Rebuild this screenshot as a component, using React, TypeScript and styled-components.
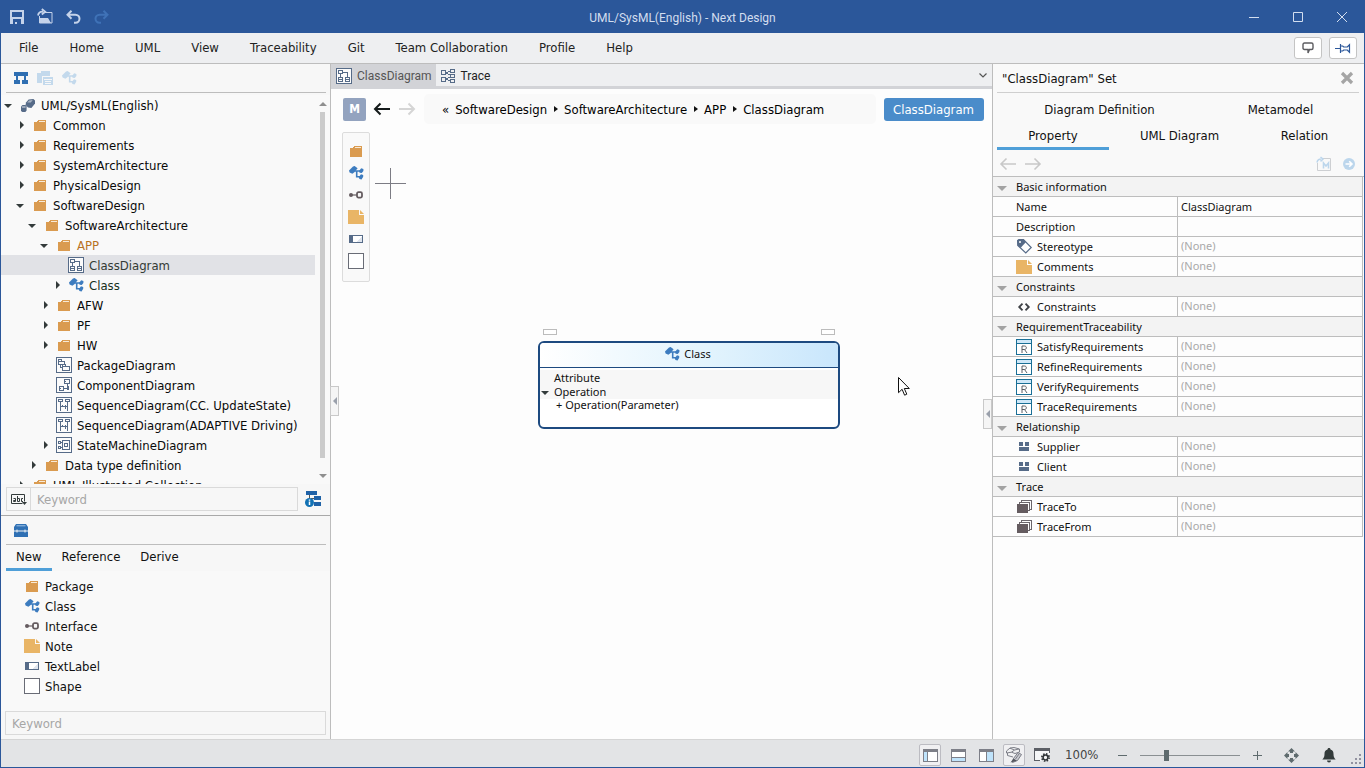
import React, { useState } from "react";
import styled, { createGlobalStyle, css } from "styled-components";

const ui = '"DejaVu Sans Condensed", "Noto Sans", sans-serif';
const small = '"Noto Sans", "Open Sans", sans-serif';
const caption = 'Roboto, "Open Sans", sans-serif';
const blue = "#2b579a";
const slate = "#566b88";
const line = "#bdbdbd";
const accent = "#4f9fd8";

const GlobalStyle = createGlobalStyle`
  *, *::before, *::after { box-sizing: border-box; }
  body { margin: 0; background: ${blue}; font-family: ${ui}; font-size: 13px; color: #111; }
  button, input { font: inherit; color: inherit; }
  button { padding: 0; border: 0; background: none; cursor: default; }
  ul, ol { margin: 0; padding: 0; list-style: none; }
  h1, h2 { margin: 0; font-size: inherit; font-weight: 400; }
  svg { display: block; flex: none; overflow: visible; }
`;

/* ---------- window ---------- */

const Window = styled.div`
  height: 100vh;
  display: flex;
  flex-direction: column;
  border: 1px solid ${blue};
  border-top: 0;
  background: #f8f8f8;
  overflow: hidden;
`;
const TitleBar = styled.header`
  flex: none;
  height: 33px;
  display: grid;
  grid-template-columns: 1fr auto 1fr;
  align-items: center;
  background: ${blue};
  color: #c9d6ea;
`;
const QuickBar = styled.div`
  display: flex;
  gap: 12px;
  padding-left: 8px;
`;
const IconButton = styled.button`
  width: 16px;
  height: 16px;
  display: flex;
  align-items: center;
  justify-content: center;
`;
const WindowTitle = styled.h1`
  font-family: ${caption};
  font-size: 12px;
  line-height: 16px;
  padding-top: 2px;
  color: #d3deef;
`;
const WindowButtons = styled.div`
  display: flex;
  justify-content: flex-end;
`;
const WindowButton = styled.button`
  width: 44px;
  height: 32px;
  display: flex;
  align-items: center;
  justify-content: center;
`;
const MenuBar = styled.nav`
  flex: none;
  height: 31px;
  display: flex;
  align-items: center;
  padding: 0 7px 0 0;
  background: #eeeff1;
  border-bottom: 1px solid ${line};
`;
const MenuList = styled.ul`
  flex: 1;
  display: flex;
  gap: 31px;
  padding: 0 0 2px 18px;
  color: #222;
`;
const MenuActions = styled.div`
  display: flex;
  gap: 7px;
`;
const MenuAction = styled.button`
  width: 28px;
  height: 22px;
  display: flex;
  align-items: center;
  justify-content: center;
  background: #fff;
  border: 1px solid #c4c4c4;
  border-radius: 3px;
`;
const Main = styled.main`
  flex: 1;
  min-height: 0;
  display: flex;
`;

/* ---------- left pane ---------- */

const SidePane = styled.aside`
  flex: none;
  width: 330px;
  display: flex;
  flex-direction: column;
  border-right: 1px solid ${line};
  background: #f7f7f7;
`;
const PaneTools = styled.div`
  flex: none;
  height: 29px;
  display: flex;
  align-items: center;
  gap: 8px;
  margin: 0 4px 0 5px;
  padding-left: 7px;
  border-bottom: 1px solid ${line};
`;
const TreeArea = styled.div`
  flex: 1;
  min-height: 0;
  display: flex;
  margin-top: 2px;
  overflow: hidden;
  background: #f9f9f9;
`;
const Tree = styled.ul`
  flex: 1;
  overflow: hidden;
`;
const TreeRow = styled.li<{ $level: number; $selected?: boolean; $tone?: string }>`
  height: 20px;
  display: flex;
  align-items: center;
  padding-left: ${(p) => 1 + p.$level * 12}px;
  line-height: 16px;
  white-space: nowrap;
  color: ${(p) => p.$tone || "#0a0a0a"};
  background: ${(p) => (p.$selected ? "#e1e2e6" : "transparent")};
`;
const TreeLabel = styled.span`
  padding-top: 2px;
`;
const Toggle = styled.button`
  width: 12px;
  height: 16px;
  margin-right: 6px;
  display: flex;
  align-items: center;
  justify-content: center;
`;
const IconSlot = styled.span`
  flex: none;
  width: 16px;
  height: 16px;
  margin-right: 5px;
  display: flex;
  align-items: center;
  justify-content: center;
`;
const ScrollBar = styled.div`
  flex: none;
  width: 5px;
  margin: 0 5px;
  padding: 7px 0 6px;
  display: flex;
  flex-direction: column;
  align-items: center;
  gap: 6px;
`;
const ScrollThumb = styled.div`
  flex: 1;
  width: 5px;
  margin-bottom: 10px;
  background: #cbcbcb;
`;
const FilterRow = styled.div`
  flex: none;
  display: flex;
  align-items: center;
  gap: 7px;
  padding: 3px 9px 4px 5px;
  border-bottom: 1px solid #a9a9a9;
`;
const FilterBox = styled.div`
  flex: 1;
  display: flex;
  height: 24px;
  border: 1px solid #dadada;
`;
const FilterMode = styled.button`
  width: 24px;
  padding-top: 1px;
  display: flex;
  align-items: center;
  justify-content: center;
  border-right: 1px solid #dadada;
`;
const fieldText = css`
  outline: 0;
  background: transparent;
  &::placeholder { color: #a6a6a6; opacity: 1; }
`;
const FilterInput = styled.input`
  ${fieldText}
  flex: 1;
  min-width: 0;
  border: 0;
  padding: 0 6px;
`;
const ToolTabs = styled.div`
  flex: none;
  display: flex;
  padding-left: 5px;
`;
const ToolTab = styled.button<{ $active?: boolean }>`
  height: 26px;
  padding: 0 10px;
  border-bottom: 3px solid ${(p) => (p.$active ? accent : "transparent")};
`;
const ToolList = styled.ul`
  padding: 5px 0 15px 23px;
  background: #f9f9f9;
`;
const ToolItem = styled.li`
  display: flex;
  align-items: center;
  height: 20px;
`;
const ToolFilter = styled.input`
  ${fieldText}
  height: 24px;
  margin: 0 4px 4px 4px;
  padding: 0 6px;
  border: 1px solid #dadada;
`;

/* ---------- editor ---------- */

const Editor = styled.section`
  flex: 1;
  min-width: 0;
  display: flex;
  flex-direction: column;
  position: relative;
  background: #fdfdfd;
`;
const DocTabs = styled.div`
  flex: none;
  height: 25px;
  display: flex;
  align-items: stretch;
  background: #eeeff1;
  border-bottom: 3px solid #d2d3d7;
`;
const DocTab = styled.button<{ $active?: boolean }>`
  display: flex;
  align-items: center;
  gap: 5px;
  padding: 2px 4px 0 5px;
  font-family: ${caption};
  font-size: 12px;
  color: ${(p) => (p.$active ? "#555" : "#222")};
  background: ${(p) => (p.$active ? "#d2d3d7" : "transparent")};
`;
const TabsMenu = styled.button`
  margin-left: auto;
  width: 18px;
  display: flex;
  align-items: center;
  justify-content: center;
`;
const EditorHead = styled.div`
  flex: none;
  display: flex;
  align-items: center;
  gap: 8px;
  padding: 5px 8px 0 12px;
`;
const ModeButton = styled.button`
  width: 23px;
  height: 23px;
  border-radius: 2px;
  background: #93a3bf;
  color: #fff;
  font-weight: 700;
  font-size: 12px;
`;
const NavArrow = styled.button`
  width: 16px;
  height: 16px;
  margin-right: 1px;
`;
const Crumbs = styled.ol`
  flex: 1;
  min-width: 0;
  height: 30px;
  display: flex;
  align-items: center;
  padding-left: 18px;
  border-radius: 5px;
  background: #f9f9f9;
  color: #000;
  white-space: nowrap;
`;
const Crumb = styled.li`
  display: flex;
  align-items: center;
  & + & { margin-left: 7px; }
  & + &::before {
    content: "";
    margin-right: 6px;
    border: solid transparent;
    border-width: 3px 0 3px 4px;
    border-left-color: #111;
  }
`;
const Quote = styled.span`
  margin-right: 6px;
`;
const KindButton = styled.button`
  height: 23px;
  padding: 0 10px 0 9px;
  border-radius: 3px;
  background: #4a8cca;
  color: #fff;
`;
const Canvas = styled.div`
  flex: 1;
  min-height: 0;
  position: relative;
  overflow: hidden;
`;
const Palette = styled.div`
  position: absolute;
  left: 11px;
  top: 8px;
  display: flex;
  flex-direction: column;
  padding: 7px 5px 9px;
  border: 1px solid #dcdcdc;
  border-radius: 2px;
  background: #f9f9f9;
`;
const PaletteButton = styled.button`
  width: 16px;
  height: 22px;
  display: flex;
  align-items: center;
  justify-content: center;
`;
const Placed = styled.div<{ $x: number; $y: number }>`
  position: absolute;
  left: ${(p) => p.$x}px;
  top: ${(p) => p.$y}px;
`;
const Port = styled.div`
  width: 14px;
  height: 6px;
  border: 1px solid #bcbcbc;
  background: #fff;
`;
const ClassNode = styled.div`
  width: 302px;
  height: 88px;
  border: 2px solid #1d4a80;
  border-radius: 6px;
  background: #fff;
  overflow: hidden;
  font-family: ${small};
  font-size: 11px;
  color: #111;
`;
const ClassHead = styled.div`
  height: 25px;
  display: flex;
  align-items: center;
  justify-content: center;
  gap: 4px;
  padding: 0 2px 3px 0;
  background: linear-gradient(90deg, #fff, #e3f4fd 55%, #c9e6fc);
  border-bottom: 1px solid #1d4a80;
`;
const Compartment = styled.div`
  margin-top: 2px;
  padding-top: 1px;
  background: #f7f7f7;
`;
const CompartmentRow = styled.div`
  height: 14px;
  line-height: 14px;
  display: flex;
  align-items: center;
`;
const CompartmentMark = styled.span`
  width: 14px;
  padding-left: 1px;
`;
const MemberRow = styled.div`
  padding-left: 16px;
  line-height: 12px;
`;
const Handle = styled.button<{ $side: "left" | "right" }>`
  position: absolute;
  ${(p) => (p.$side === "left" ? "left: -1px; top: 322px;" : "right: 0; top: 335px;")}
  width: 9px;
  height: 30px;
  display: flex;
  align-items: center;
  justify-content: center;
  background: #f5f5f5;
  border: 1px solid #c9c9c9;
`;

/* ---------- inspector ---------- */

const Inspector = styled.aside`
  flex: none;
  width: 372px;
  display: flex;
  flex-direction: column;
  border-left: 1px solid ${line};
  background: #fdfdfd;
`;
const InspectorTop = styled.div`
  padding: 0 5px 0 4px;
  background: #f9f9f9;
  border-bottom: 1px solid ${line};
`;
const InspectorTitle = styled.div`
  height: 29px;
  display: flex;
  align-items: center;
  justify-content: space-between;
  padding: 0 4px 0 5px;
  border-bottom: 1px solid #cfcfcf;
`;
const InspectorTabs = styled.div<{ $columns: string }>`
  display: grid;
  grid-template-columns: ${(p) => p.$columns};
`;
const InspectorTab = styled.button<{ $active?: boolean }>`
  height: 28px;
  padding-top: 2px;
  border-bottom: 3px solid ${(p) => (p.$active ? accent : "transparent")};
`;
const InspectorTabTop = styled.button`
  height: 29px;
  padding-top: 4px;
`;
const InspectorNav = styled.div`
  height: 26px;
  display: flex;
  align-items: center;
  gap: 9px;
  padding: 2px 2px 0 3px;
`;
const Spacer = styled.span`
  flex: 1;
`;
const PropTable = styled.table`
  width: 370px;
  border-collapse: separate;
  border-spacing: 0;
  table-layout: fixed;
  border-right: 1px solid ${line};
  font-family: ${small};
  font-size: 11px;
  color: #111;
  td, th {
    height: 20px;
    padding: 0;
    border-bottom: 1px solid ${line};
    font-weight: 400;
    text-align: left;
    line-height: 18px;
    overflow: hidden;
    white-space: nowrap;
  }
`;
const NameCol = styled.col`
  width: 184px;
`;
const GroupHead = styled.th`
  background: #f3f3f3;
`;
const GroupInner = styled.div`
  display: flex;
  align-items: center;
  gap: 9px;
  padding-left: 4px;
`;
const NameInner = styled.div`
  display: flex;
  align-items: center;
  height: 19px;
  padding-left: 23px;
`;
const ValueCell = styled.td<{ $empty?: boolean }>`
  && {
    padding-left: 3px;
    padding-bottom: ${(p) => (p.$empty ? 1 : 0)}px;
    border-left: 1px solid ${line};
  }
  color: ${(p) => (p.$empty ? "#a9a9a9" : "#111")};
`;

/* ---------- status bar ---------- */

const StatusBar = styled.footer`
  flex: none;
  height: 28px;
  display: flex;
  align-items: center;
  justify-content: flex-end;
  padding: 3px 2px 0 0;
  background: #e3e4e6;
  border-top: 1px solid #d5d5d5;
`;
const StatusButtons = styled.div`
  display: flex;
  gap: 6px;
`;
const StatusButton = styled.button<{ $pressed?: boolean }>`
  width: 22px;
  height: 22px;
  display: flex;
  align-items: center;
  justify-content: center;
  border: 1px solid ${(p) => (p.$pressed ? "#bcbcc2" : "transparent")};
  border-radius: 2px;
  background: ${(p) => (p.$pressed ? "#f0f0f2" : "transparent")};
`;
const ZoomText = styled.output`
  width: 48px;
  padding: 0 0 2px 12px;
  margin-right: 17px;
  color: #444;
`;
const Slider = styled.input`
  appearance: none;
  width: 100px;
  height: 12px;
  margin: 0 13px;
  background: linear-gradient(#8a8f92, #8a8f92) center / 100% 1px no-repeat;
  &::-webkit-slider-thumb {
    appearance: none;
    width: 5px;
    height: 11px;
    background: #5f6b6e;
  }
`;
const StatusEnd = styled.div`
  display: flex;
  align-items: center;
  gap: 22px;
  margin-left: 21px;
`;
const Grip = styled.span`
  align-self: flex-end;
  margin-left: 14px;
`;

/* ---------- icons ---------- */

const FolderIcon = () => (
  <svg width="12" height="11" viewBox="0 0 12 11" shapeRendering="crispEdges">
    <path d="M0 2h3l1-2h8v11H0z" fill="#da9b50" />
    <path d="M4 2h7V1H5z" fill="#f8ead6" />
  </svg>
);
const ClassIcon = ({ color = "#3d7cbf" }: { color?: string }) => (
  <svg width="15" height="14" viewBox="0 0 15 14">
    <path d="M0 4.6 4 .4 5.600 0l3 2.200L5.400 6.200l-2 1.600L.6 6.600z" fill={color} />
    <path d="M5.500 5h6M7.700 5v5.800H11" fill="none" stroke={color} strokeWidth="1.600" />
    <path d="m12.200 2.200 2.200.8v2L12.800 7l-2.200-.2-.6-1.900zM12 8.200l2.200.8v1.800L12.600 13.400l-2.200-.4-.6-1.900z" fill={color} />
  </svg>
);
const InterfaceIcon = () => (
  <svg width="14" height="8" viewBox="0 0 14 8">
    <circle cx="2" cy="4" r="2" fill="#655c60" />
    <path d="M3 4h5" stroke="#655c60" strokeWidth="1.2" />
    <rect x="8" y="1.2" width="5" height="5.4" rx="1.5" fill="none" stroke="#655c60" strokeWidth="1.8" />
  </svg>
);
const NoteIcon = () => (
  <svg width="16" height="14" viewBox="0 0 16 14">
    <path d="M0 0h11v5h5v9H0z" fill="#e9b566" />
    <path d="M12 0v4h4z" fill="#e9b566" />
  </svg>
);
const TextLabelIcon = () => (
  <svg width="14" height="8" viewBox="0 0 14 8" shapeRendering="crispEdges">
    <path d="M0 0h14v8H0z" fill={slate} />
    <path d="M4 1h9v6H4z" fill="#fff" />
    <path d="M13 2v5H7z" fill="#dfe5ee" />
  </svg>
);
const ShapeIcon = () => (
  <svg width="16" height="16" viewBox="0 0 16 16">
    <rect x=".5" y=".5" width="15" height="15" fill="#fff" stroke="#696c76" />
  </svg>
);
const DiagramFrame = ({ d }: { d: string }) => (
  <svg width="16" height="16" viewBox="0 0 16 16" fill="none" stroke={slate} shapeRendering="crispEdges">
    <rect x=".5" y=".5" width="15" height="15" fill="#fbfbfb" />
    <path d={d} />
  </svg>
);
const ClassDiagramIcon = () => (
  <DiagramFrame d="M2.5 2.5h4v3h-4zM2.5 9.5h4v4h-4zM9.5 9.5h4v4h-4zM4.5 5.5v4M6.5 4.5h5v5M2.5 11.5h4M9.5 11.5h4" />
);
const PackageDiagramIcon = () => (
  <DiagramFrame d="M2.5 2.5h3v2h-3zM2.5 4.5h6v3h-6zM6.5 7.5h3v2h-3zM6.5 9.5h7v4h-7zM4.5 7.5v3h2" />
);
const ComponentDiagramIcon = () => (
  <DiagramFrame d="M8.5 2.5h5v4h-5zM7.5 4.5h2M3.5 9.5h4v4h-4zM2.5 11.5h2M7.5 11.5h4v-5M10.5 9.5h2v3h-2" />
);
const SequenceDiagramIcon = () => (
  <DiagramFrame d="M2.5 2.5h4v2h-4zM9.5 2.5h4v2h-4zM4.5 4.5v9M11.5 4.5v9M4.5 9.5h7M9.5 7.5v4M6.5 7.5v1" />
);
const StateDiagramIcon = () => (
  <DiagramFrame d="M2.5 4.5h2v2h-2zM6.5 3.5h7v9h-7zM8.5 6.5h3v3h-3zM2.5 9.5h2v2h-2zM4.5 5.5h2M4.5 10.5h2" />
);
const ProjectIcon = () => (
  <svg width="14" height="13" viewBox="0 0 14 13">
    <path d="M5 3.4 7.6.6 12.4 0 14 1.4v3L10.4 9 7 8.4 4.6 6z" fill={slate} />
    <path d="m6.2 3.6 2-2.2 3.6-.3-2 2.4z" fill="#a9b4c4" />
    <path d="M0 7.4 1.5 6h3L5.6 7v4.5L4.4 13h-3L0 12z" fill={slate} />
    <path d="M1 8h3.6" stroke="#dfe4ea" />
  </svg>
);
const TracePageIcon = () => (
  <svg width="15" height="14" viewBox="0 0 15 14" fill="none" stroke={slate} shapeRendering="crispEdges">
    <path d="M.5 1.5h4v4h-4zM.5 8.5h4v4h-4zM9.5.5h4v3h-4zM9.5 5.5h4v3h-4zM9.5 10.5h4v3h-4zM4.5 3.5l5-1M4.5 3.5l5 3M4.5 10.5l5-3M4.5 10.5l5 1" />
  </svg>
);
const Caret = ({ open, color = "#333b3b" }: { open?: boolean; color?: string }) => (
  <svg width="8" height="8" viewBox="0 0 8 8">
    <path d={open ? "M0 3h8L4 7z" : "M4 0v8l4-4z"} fill={color} />
  </svg>
);
const GroupCaret = () => (
  <svg width="10" height="8" viewBox="0 0 10 8"><path d="M0 3h10L5 8z" fill="#a2a2a2" /></svg>
);
const ArrowIcon = ({ right, color, width = 1.6 }: { right?: boolean; color: string; width?: number }) => (
  <svg width="16" height="16" viewBox="0 0 16 16" fill="none" stroke={color} strokeWidth={width}>
    <path d={right ? "M0 8h15M9.5 2.5 15 8l-5.5 5.5" : "M16 8H1M6.5 2.5 1 8l5.5 5.5"} />
  </svg>
);
const ReqIcon = () => (
  <svg width="16" height="16" viewBox="0 0 16 16" shapeRendering="crispEdges">
    <rect x=".5" y=".5" width="15" height="15" fill="#fff" stroke="#1a6f96" />
    <path d="M1 1h14v3H1z" fill="#cfe9fa" />
    <path d="M1 4.5h14" stroke="#1a6f96" />
    <path d="M6 14V7h2.5c2.500 0 2.500 3.500 0 3.500H6M8.500 10.500 11 14" fill="none" stroke="#5a5f66" shapeRendering="auto" />
  </svg>
);
const TagIcon = () => (
  <svg width="15" height="15" viewBox="0 0 15 15">
    <path d="M.6 1.600 2 .6h4.500L14.200 8.500 8.800 14 .8 6.400z" fill="#fff" stroke={slate} strokeWidth="1.200" />
    <path d="M.5 1.500 1.500.5h5L9 3 3.500 9 .5 6.200z" fill={slate} />
    <circle cx="3" cy="3" r="1" fill="#fff" />
  </svg>
);
const CodeIcon = () => (
  <svg width="12" height="8" viewBox="0 0 12 8" fill="none" stroke="#3f4246" strokeWidth="1.800">
    <path d="M4.500.6 1.200 4l3.300 3.400M7.500.6 10.800 4 7.500 7.400" />
  </svg>
);
const RelationIcon = () => (
  <svg width="10" height="9" viewBox="0 0 10 9" fill={slate} shapeRendering="crispEdges">
    <path d="M0 0h4v4H0zM6 0h4v4H6zM0 5h10v4H0z" />
  </svg>
);
const StackIcon = () => (
  <svg width="15" height="13" viewBox="0 0 15 13" shapeRendering="crispEdges">
    <path d="M4.500 2V.5h10v9H13M2.500 4V2.500h10v8H11" fill="none" stroke="#6b666b" />
    <path d="M0 4h11v9H0z" fill="#655c60" />
  </svg>
);
const LayoutIcon = ({ area }: { area: string }) => (
  <svg width="15" height="13" viewBox="0 0 15 13" shapeRendering="crispEdges">
    <rect x=".5" y=".5" width="14" height="12" fill="#fff" stroke="#7d7f88" />
    <path d={area} fill="#bfe3fb" stroke="#7d7f88" strokeWidth="1" />
    <path d="M0 0h15v3H0z" fill="#7d7f88" />
  </svg>
);

/* ---------- data ---------- */

const folder = <FolderIcon />;
const known = "#16301c";

type Node = { level: number; label: string; icon: React.ReactNode; open?: boolean; leaf?: boolean; tone?: string };

const nodes: Node[] = [
  { level: 0, label: "UML/SysML(English)", icon: <ProjectIcon />, open: true },
  { level: 1, label: "Common", icon: folder },
  { level: 1, label: "Requirements", icon: folder },
  { level: 1, label: "SystemArchitecture", icon: folder },
  { level: 1, label: "PhysicalDesign", icon: folder },
  { level: 1, label: "SoftwareDesign", icon: folder, open: true },
  { level: 2, label: "SoftwareArchitecture", icon: folder, open: true },
  { level: 3, label: "APP", icon: folder, open: true, tone: "#b8721f" },
  { level: 4, label: "ClassDiagram", icon: <ClassDiagramIcon />, leaf: true, tone: "#333b35" },
  { level: 4, label: "Class", icon: <ClassIcon />, tone: known },
  { level: 3, label: "AFW", icon: folder },
  { level: 3, label: "PF", icon: folder },
  { level: 3, label: "HW", icon: folder },
  { level: 3, label: "PackageDiagram", icon: <PackageDiagramIcon />, leaf: true },
  { level: 3, label: "ComponentDiagram", icon: <ComponentDiagramIcon />, leaf: true },
  { level: 3, label: "SequenceDiagram(CC. UpdateState)", icon: <SequenceDiagramIcon />, leaf: true },
  { level: 3, label: "SequenceDiagram(ADAPTIVE Driving)", icon: <SequenceDiagramIcon />, leaf: true },
  { level: 3, label: "StateMachineDiagram", icon: <StateDiagramIcon /> },
  { level: 2, label: "Data type definition", icon: folder },
  { level: 1, label: "UML Illustrated Collection", icon: folder },
];

const tools = [
  { label: "Package", icon: <FolderIcon /> },
  { label: "Class", icon: <ClassIcon /> },
  { label: "Interface", icon: <InterfaceIcon /> },
  { label: "Note", icon: <NoteIcon /> },
  { label: "TextLabel", icon: <TextLabelIcon /> },
  { label: "Shape", icon: <ShapeIcon /> },
];

type Prop = { name: string; icon?: React.ReactNode; value?: string };
const none = "(None)";
const groups: { title: string; rows: Prop[] }[] = [
  {
    title: "Basic information",
    rows: [
      { name: "Name", value: "ClassDiagram" },
      { name: "Description", value: "" },
      { name: "Stereotype", icon: <TagIcon />, value: none },
      { name: "Comments", icon: <NoteIcon />, value: none },
    ],
  },
  { title: "Constraints", rows: [{ name: "Constraints", icon: <CodeIcon />, value: none }] },
  {
    title: "RequirementTraceability",
    rows: ["SatisfyRequirements", "RefineRequirements", "VerifyRequirements", "TraceRequirements"].map((name) => ({
      name,
      icon: <ReqIcon />,
      value: none,
    })),
  },
  {
    title: "Relationship",
    rows: ["Supplier", "Client"].map((name) => ({ name, icon: <RelationIcon />, value: none })),
  },
  { title: "Trace", rows: ["TraceTo", "TraceFrom"].map((name) => ({ name, icon: <StackIcon />, value: none })) },
];

const menus = ["File", "Home", "UML", "View", "Traceability", "Git", "Team Collaboration", "Profile", "Help"];
const crumbs = ["SoftwareDesign", "SoftwareArchitecture", "APP", "ClassDiagram"];

/* ---------- sections ---------- */

const Title = () => (
  <TitleBar>
    <QuickBar>
      <IconButton aria-label="Save">
        <svg width="14" height="14" viewBox="0 0 14 14" shapeRendering="crispEdges">
          <path fillRule="evenodd" d="M0 0h14v14H0zM2 2v5h10V2zM3 9v5h2v-2h2v2h4V9z" fill="#c5d3ea" />
        </svg>
      </IconButton>
      <IconButton aria-label="Open">
        <svg width="15" height="15" viewBox="0 0 15 15" fill="none" stroke="#c5d3ea">
          <path d="M6.500 3.500h7.500v10.500H1.500v-7" />
          <path d="M1 9h9l3 5H1z" fill="#c5d3ea" stroke="none" />
          <path d="M0 6.500c.5-3 2-4 5-3.800M3.800 0l3.400 2.700-3.400 2.800" strokeWidth="1.800" />
        </svg>
      </IconButton>
      <IconButton aria-label="Undo">
        <svg width="15" height="14" viewBox="0 0 15 14" fill="none" stroke="#c5d3ea" strokeWidth="2">
          <path d="M5.500.8 1.500 4.800l4 4M1.500 4.800h7.800c5.600 0 5.600 8 0 8H8" />
        </svg>
      </IconButton>
      <IconButton aria-label="Redo">
        <svg width="15" height="14" viewBox="0 0 15 14" fill="none" stroke="#3f72b7" strokeWidth="2">
          <path d="m9.500.8 4 4-4 4M13.500 4.800H5.700c-5.600 0-5.600 8 0 8H7" />
        </svg>
      </IconButton>
    </QuickBar>
    <WindowTitle>UML/SysML(English) - Next Design</WindowTitle>
    <WindowButtons>
      <WindowButton aria-label="Minimize">
        <svg width="10" height="10" viewBox="0 0 10 10" stroke="#d3deef"><path d="M0 5.500h10" /></svg>
      </WindowButton>
      <WindowButton aria-label="Maximize">
        <svg width="10" height="10" viewBox="0 0 10 10" fill="none" stroke="#d3deef"><path d="M.5.5h9v9h-9z" /></svg>
      </WindowButton>
      <WindowButton aria-label="Close">
        <svg width="10" height="10" viewBox="0 0 10 10" stroke="#d3deef"><path d="m0 0 10 10M10 0 0 10" /></svg>
      </WindowButton>
    </WindowButtons>
  </TitleBar>
);

const Menu = () => (
  <MenuBar>
    <MenuList>
      {menus.map((m) => (
        <li key={m}>
          <button>{m}</button>
        </li>
      ))}
    </MenuList>
    <MenuActions>
      <MenuAction aria-label="Feedback">
        <svg width="12" height="12" viewBox="0 0 12 12" fill="none" stroke="#5c5c60" strokeWidth="1.400">
          <path d="M2.500 1h7Q11 1 11 2.500v3.500Q11 7.500 9.500 7.500H7.500L6 11V7.500H2.500Q1 7.500 1 6V2.500Q1 1 2.500 1z" />
        </svg>
      </MenuAction>
      <MenuAction aria-label="Pin ribbon">
        <svg width="16" height="9" viewBox="0 0 16 9" fill="none" stroke={blue} strokeWidth="1.200">
          <path d="M0 4.500h5M5.500 0v9M5.500 2h2.200l1 1h3.600L14.500.8v7.400L12.300 6H8.700l-1 1H5.500" />
        </svg>
      </MenuAction>
    </MenuActions>
  </MenuBar>
);

const LeftPane = () => {
  const [selected, setSelected] = useState(8);
  return (
    <SidePane>
      <PaneTools>
        <IconButton aria-label="Model tree">
          <svg width="14" height="12" viewBox="0 0 14 12" fill="#2f6fb2" shapeRendering="crispEdges">
            <path d="M0 0h14v4H0zM2 4h2v4H2zM10 4h2v4h-2zM0 8h6v4H0zM8 8h6v4H8z" />
          </svg>
        </IconButton>
        <IconButton aria-label="Documents">
          <svg width="16" height="14" viewBox="0 0 16 14" fill="#c3d9ec" shapeRendering="crispEdges">
            <path d="M0 2h4V0h9v5H5v7H0z" />
            <path fillRule="evenodd" d="M6 6h10v8H6zM7 8v1h8V8zM8 10v1h6v-1zM8 12v1h6v-1z" />
          </svg>
        </IconButton>
        <IconButton aria-label="Classes">
          <ClassIcon color="#c3d9ec" />
        </IconButton>
      </PaneTools>
      <TreeArea>
        <Tree role="tree">
          {nodes.map((n, i) => (
            <TreeRow
              key={i}
              role="treeitem"
              aria-selected={i === selected}
              $level={n.level}
              $selected={i === selected}
              $tone={n.tone}
              onClick={() => setSelected(i)}
            >
              <Toggle aria-label={n.label}>{!n.leaf && <Caret open={n.open} />}</Toggle>
              <IconSlot>{n.icon}</IconSlot>
              <TreeLabel>{n.label}</TreeLabel>
            </TreeRow>
          ))}
        </Tree>
        <ScrollBar>
          <svg width="8" height="4" viewBox="0 0 8 4"><path d="M0 4h8L4 0z" fill="#8f8f8f" /></svg>
          <ScrollThumb />
          <svg width="8" height="4" viewBox="0 0 8 4"><path d="M0 0h8L4 4z" fill="#8f8f8f" /></svg>
        </ScrollBar>
      </TreeArea>
      <FilterRow>
        <FilterBox>
          <FilterMode aria-label="Match mode">
            <svg width="16" height="12" viewBox="0 0 16 12">
              <path d="M.5.5h13v7M.5.5v9h11" fill="none" stroke="#333b3b" />
              <path d="M2.500 4.500h2v3h-2v-1h2M6.500 2v5.500h2v-3h-2M12 4.500h-1.500v3H12" fill="none" stroke="#333b3b" />
              <path d="M11 8h5l-2.500 3z" fill="#333b3b" />
            </svg>
          </FilterMode>
          <FilterInput aria-label="Filter model tree" placeholder="Keyword" />
        </FilterBox>
        <IconButton aria-label="Tree information">
          <svg width="16" height="16" viewBox="0 0 16 16">
            <path d="M1 0h11v4H1zM9 5h7v4H9zM9 11h7v4H9z" fill="#1f62a7" />
            <path d="M4.500 4v3M6 7.500h3" stroke="#555" />
            <circle cx="4.500" cy="11.500" r="4.500" fill="#1272b4" />
            <path d="M4.500 8.500v1.300M4.500 10.500V14" stroke="#fff" strokeWidth="1.500" />
          </svg>
        </IconButton>
      </FilterRow>
      <PaneTools>
        <IconButton aria-label="Toolbox">
          <svg width="14" height="13" viewBox="0 0 14 13" fill="#2f70b4">
            <path d="M2 0h10l2 3v3.500h-2.500V5.500h-1v1h-7v-1h-1v1H0V3zM0 7.500h2.500v1h1v-1h7v1h1v-1H14V13H0z" />
            <path d="M2.500 1.800h9" stroke="#9fc2e4" />
          </svg>
        </IconButton>
      </PaneTools>
      <ToolTabs role="tablist">
        <ToolTab role="tab" $active>New</ToolTab>
        <ToolTab role="tab">Reference</ToolTab>
        <ToolTab role="tab">Derive</ToolTab>
      </ToolTabs>
      <ToolList>
        {tools.map((t) => (
          <ToolItem key={t.label}>
            <IconSlot>{t.icon}</IconSlot>
            {t.label}
          </ToolItem>
        ))}
      </ToolList>
      <ToolFilter aria-label="Filter tools" placeholder="Keyword" />
    </SidePane>
  );
};

const EditorPane = () => (
  <Editor>
    <DocTabs role="tablist">
      <DocTab role="tab" $active>
        <ClassDiagramIcon />
        ClassDiagram
      </DocTab>
      <DocTab role="tab">
        <TracePageIcon />
        Trace
      </DocTab>
      <TabsMenu aria-label="Open tabs">
        <svg width="8" height="5" viewBox="0 0 8 5" fill="none" stroke="#555" strokeWidth="1.200"><path d="m.5.5 3.500 3.500L7.500.5" /></svg>
      </TabsMenu>
    </DocTabs>
    <EditorHead>
      <ModeButton>M</ModeButton>
      <NavArrow aria-label="Back"><ArrowIcon color="#151b1b" width={2} /></NavArrow>
      <NavArrow aria-label="Forward"><ArrowIcon right color="#d5d5d5" width={2} /></NavArrow>
      <Crumbs>
        <Quote>«</Quote>
        {crumbs.map((c) => (
          <Crumb key={c}>{c}</Crumb>
        ))}
      </Crumbs>
      <KindButton>ClassDiagram</KindButton>
    </EditorHead>
    <Canvas>
      <Palette>
        {tools.map((t) => (
          <PaletteButton key={t.label} aria-label={t.label}>{t.icon}</PaletteButton>
        ))}
      </Palette>
      <Placed $x={44} $y={44}>
        <svg width="31" height="31" viewBox="0 0 31 31" stroke="#7c7c84" shapeRendering="crispEdges">
          <path d="M0 15.500h31M15.500 0v31" />
        </svg>
      </Placed>
      <Placed $x={212} $y={205}><Port /></Placed>
      <Placed $x={490} $y={205}><Port /></Placed>
      <Placed $x={207} $y={217}>
        <ClassNode>
          <ClassHead>
            <ClassIcon />
            Class
          </ClassHead>
          <Compartment>
            <CompartmentRow><CompartmentMark />Attribute</CompartmentRow>
            <CompartmentRow>
              <CompartmentMark><Caret open /></CompartmentMark>
              Operation
            </CompartmentRow>
          </Compartment>
          <MemberRow>+ Operation(Parameter)</MemberRow>
        </ClassNode>
      </Placed>
      <Placed $x={567} $y={253}>
        <svg width="12" height="19" viewBox="0 0 12 19">
          <path d="M.5.5v15.200l3.600-3.400 2.500 5.900 2.200-1-2.500-5.700h5z" fill="#fff" stroke="#111" />
        </svg>
      </Placed>
    </Canvas>
    <Handle $side="left" aria-label="Collapse left pane">
      <svg width="4" height="8" viewBox="0 0 4 8"><path d="M4 0v8L0 4z" fill="#9aa0ab" /></svg>
    </Handle>
    <Handle $side="right" aria-label="Collapse right pane">
      <svg width="4" height="8" viewBox="0 0 4 8"><path d="M4 0v8L0 4z" fill="#9aa0ab" /></svg>
    </Handle>
  </Editor>
);

const InspectorPane = () => (
  <Inspector>
    <InspectorTop>
      <InspectorTitle>
        <h2>"ClassDiagram" Set</h2>
        <IconButton aria-label="Close inspector">
          <svg width="12" height="12" viewBox="0 0 12 12" stroke="#a5a5a5" strokeWidth="3.200"><path d="m1 1 10 10M11 1 1 11" /></svg>
        </IconButton>
      </InspectorTitle>
      <InspectorTabs $columns="205fr 157fr">
        <InspectorTabTop>Diagram Definition</InspectorTabTop>
        <InspectorTabTop>Metamodel</InspectorTabTop>
      </InspectorTabs>
      <InspectorTabs $columns="112fr 141fr 109fr">
        <InspectorTab $active>Property</InspectorTab>
        <InspectorTab>UML Diagram</InspectorTab>
        <InspectorTab>Relation</InspectorTab>
      </InspectorTabs>
      <InspectorNav>
        <IconButton aria-label="Previous"><ArrowIcon color="#c8c8c8" /></IconButton>
        <IconButton aria-label="Next"><ArrowIcon right color="#c8c8c8" /></IconButton>
        <Spacer />
        <IconButton aria-label="Go to metamodel">
          <svg width="14" height="14" viewBox="0 0 14 14" fill="none" stroke="#cdcfd2">
            <path d="M6 1.500h7.500v12H.5V6" />
            <path d="M0 5.500c.5-2.500 1.500-3.400 4-3.400M3.500 0 6 2.100 3.500 4.400" stroke="#bcd6ec" strokeWidth="1.500" />
            <path d="M6.500 11.500V6l2.500 3 2.500-3v5.500" stroke="#bcd6ec" strokeWidth="1.600" />
          </svg>
        </IconButton>
        <IconButton aria-label="Jump">
          <svg width="12" height="12" viewBox="0 0 12 12">
            <circle cx="6" cy="6" r="6" fill="#bcd6ec" />
            <path d="M2.500 6H9M6.200 3.200 9 6 6.200 8.800" fill="none" stroke="#fff" strokeWidth="1.600" />
          </svg>
        </IconButton>
      </InspectorNav>
    </InspectorTop>
    <PropTable>
      <colgroup>
        <NameCol />
        <col />
      </colgroup>
      {groups.map((g) => (
        <tbody key={g.title}>
          <tr>
            <GroupHead colSpan={2} scope="rowgroup">
              <GroupInner>
                <GroupCaret />
                {g.title}
              </GroupInner>
            </GroupHead>
          </tr>
          {g.rows.map((r) => (
            <tr key={r.name}>
              <th scope="row">
                <NameInner>
                  {r.icon && <IconSlot>{r.icon}</IconSlot>}
                  {r.name}
                </NameInner>
              </th>
              <ValueCell $empty={r.value === none}>{r.value}</ValueCell>
            </tr>
          ))}
        </tbody>
      ))}
    </PropTable>
  </Inspector>
);

const Status = () => {
  const [zoom, setZoom] = useState(100);
  return (
    <StatusBar>
      <StatusButtons>
        <StatusButton $pressed aria-label="Left pane"><LayoutIcon area="M.5 2.500h4v10h-4z" /></StatusButton>
        <StatusButton aria-label="Bottom pane"><LayoutIcon area="M.5 8.500h14v4H.5z" /></StatusButton>
        <StatusButton aria-label="Right pane"><LayoutIcon area="M7.500 2.500h7v10h-7z" /></StatusButton>
        <StatusButton $pressed aria-label="Annotate">
          <svg width="16" height="16" viewBox="0 0 16 16" fill="none" stroke="#7d7f88">
            <path d="M.5 4 4 1l4-.5L13.500 2v3L9 6.500 5.500 5.200.5 6zM4 1.200 8.500 3l4.500-1M5.500 5.200 8.500 3" />
            <path d="M1.500 6v2.500L7 10" />
            <path d="m7.500 11.500 4.500-6 3.500 2-4 6-5 2z" fill="#c9cad0" />
            <path d="m9.500 12 3.500-5" />
            <path d="m4.500 15.600 3-4.100 3.500 2.300z" fill="#55575f" stroke="none" />
          </svg>
        </StatusButton>
        <StatusButton aria-label="View settings">
          <svg width="16" height="14" viewBox="0 0 16 14">
            <path d="M0 0h16v13H0z" fill="#f5f6f7" />
            <path d="M.5 12V.5h15V5M0 12.500h6" fill="none" stroke="#5c5f66" />
            <path d="M0 0h16v3H0z" fill="#5c5f66" />
            <circle cx="11.500" cy="9.500" r="3.600" fill="none" stroke="#33373a" strokeWidth="1.800" strokeDasharray="1.500 1.330" />
            <circle cx="11.500" cy="9.500" r="2.400" fill="none" stroke="#33373a" strokeWidth="1.500" />
          </svg>
        </StatusButton>
      </StatusButtons>
      <ZoomText>{zoom}%</ZoomText>
      <button aria-label="Zoom out" onClick={() => setZoom(zoom - 10)}>
        <svg width="9" height="9" viewBox="0 0 9 9" stroke="#5f6b6e"><path d="M0 4.500h9" /></svg>
      </button>
      <Slider type="range" aria-label="Zoom" min={10} max={360} value={zoom} onChange={(e) => setZoom(Number(e.target.value))} />
      <button aria-label="Zoom in" onClick={() => setZoom(zoom + 10)}>
        <svg width="9" height="9" viewBox="0 0 9 9" stroke="#5f6b6e"><path d="M0 4.500h9M4.500 0v9" /></svg>
      </button>
      <StatusEnd>
        <IconButton aria-label="Fit to window">
          <svg width="15" height="15" viewBox="0 0 15 15" fill="#5f6b6e">
            <path d="M7.500 0 11 3.500H9V5H6V3.500H4zM7.500 15 4 11.500h2V10h3v1.500h2zM0 7.500 3.500 4v2H5v3H3.500v2zM15 7.500 11.500 11V9H10V6h1.500V4z" />
          </svg>
        </IconButton>
        <IconButton aria-label="Notifications">
          <svg width="14" height="15" viewBox="0 0 14 15" fill="#333b3b">
            <path d="M7 0c1 0 1.500.7 1.500 1.500C11 2.300 11.500 4 11.500 6c0 3 .8 4 2.200 5.500H.3C1.700 10 2.500 9 2.500 6c0-2 .5-3.700 3-4.500C5.500.7 6 0 7 0zM5 12.500h4q0 2-2 2t-2-2z" />
          </svg>
        </IconButton>
      </StatusEnd>
      <Grip>
        <svg width="11" height="13" viewBox="0 0 11 13" fill="#9292a0" shapeRendering="crispEdges">
          <path d="M8 0h2v2H8zM4 4h2v2H4zM8 4h2v2H8zM0 8h2v2H0zM4 8h2v2H4zM8 8h2v2H8z" />
        </svg>
      </Grip>
    </StatusBar>
  );
};

export default function App() {
  return (
    <>
      <GlobalStyle />
      <Window>
        <Title />
        <Menu />
        <Main>
          <LeftPane />
          <EditorPane />
          <InspectorPane />
        </Main>
        <Status />
      </Window>
    </>
  );
}
